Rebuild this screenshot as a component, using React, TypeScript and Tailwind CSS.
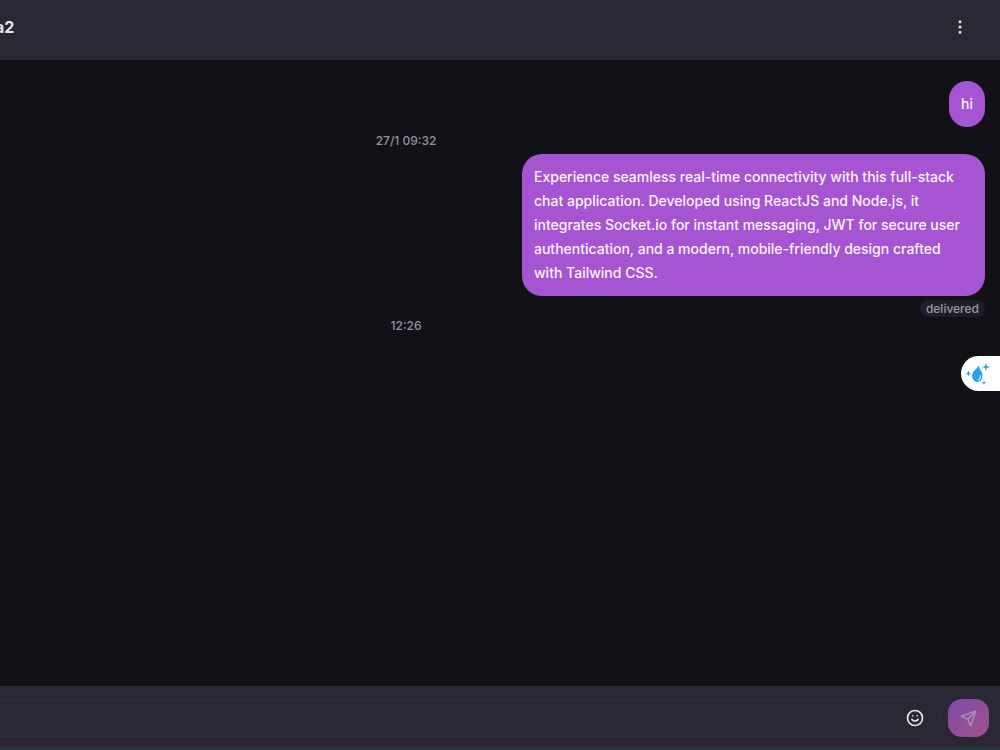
import { MoreVertical, Send, Smile } from "lucide-react";

function Assistant() {
  return (
    <button
      type="button"
      aria-label="Open assistant"
      className="absolute top-[296px] right-0 flex h-[35px] w-[39px] items-center rounded-l-full bg-white pl-[4px]"
    >
      <svg width="26" height="24" viewBox="0 0 26 24" fill="#2b9fea">
        <path d="M13.500 3c.2 4 4 5.500 4 11a5.200 6 0 0 1-10.400 0C7.100 9 12 7.500 13.500 3Z" />
        <path d="M15.300 13c.5 2.500-.5 4.500-2.600 5.200" fill="none" stroke="#b9e2fb" strokeWidth="1.200" />
        <path d="M21 1l1 3 3 1-3 1-1 3-1-3-3-1 3-1Z" />
        <path d="M3.500 8.500l.8 2.200 2.200.8-2.200.8-.8 2.200-.8-2.200-2.200-.8 2.200-.8Z" />
        <path d="M19 18.500l.6 1.700 1.700.6-1.700.6-.6 1.700-.6-1.700-1.700-.6 1.700-.6Z" />
      </svg>
    </button>
  );
}

function Bubble({ children }: { children: string }) {
  return (
    <p className="max-w-[463px] rounded-[20px] bg-[#a555d1] px-3 py-[11px] text-sm leading-6 font-medium text-[#fbf3fe]">
      {children}
    </p>
  );
}

function Time({ children }: { children: string }) {
  return <time className="mr-[173px] block text-center text-xs leading-[17px] font-medium text-[#94939f]">{children}</time>;
}

const about =
  "Experience seamless real-time connectivity with this full-stack chat application. Developed using ReactJS and Node.js, it integrates Socket.io for instant messaging, JWT for secure user authentication, and a modern, mobile-friendly design crafted with\u00a0Tailwind CSS.";

export default function App() {
  return (
    <div className="flex h-screen flex-col overflow-hidden bg-[#121117] font-['Inter',sans-serif] text-[#e4e3ea]">
      <header className="flex h-[60px] shrink-0 items-center justify-between bg-[#292834] pr-[30px] pb-[6px]">
        <h1 className="-ml-[5px] text-base font-bold">a2</h1>
        <button type="button" aria-label="More options">
          <MoreVertical size={18} className="mr-[1px]" />
        </button>
      </header>
      <main className="relative flex-1">
        <div className="flex flex-col pt-[21px] pr-[15px]">
          <div className="flex justify-end pb-[5px]">
            <Bubble>hi</Bubble>
          </div>
          <Time>27/1 09:32</Time>
          <div className="flex flex-col items-end pt-[5px]">
            <Bubble>{about}</Bubble>
            <span className="mt-1 rounded-full bg-[#1f1e28] px-[6px] text-xs leading-[17px] font-medium text-[#9a99a6]">
              delivered
            </span>
          </div>
          <Time>12:26</Time>
        </div>
        <Assistant />
      </main>
      <footer className="shrink-0 border-b-[3px] border-[#24363f] bg-[#292834]">
        <form className="flex items-center gap-2 pt-[13px] pr-[11px] pb-[10px]" onSubmit={(e) => e.preventDefault()}>
          <div className="flex h-[38px] flex-1 items-center rounded-r-[20px] border-y border-r border-[#302f3c] pr-[15px]">
            <input aria-label="Message" className="min-w-0 flex-1 bg-transparent text-sm outline-none" />
            <button type="button" aria-label="Emoji">
              <Smile size={18} strokeWidth={2.25} />
            </button>
          </div>
          <button
            type="submit"
            aria-label="Send"
            className="flex h-[38px] w-[41px] items-center justify-center rounded-[14px] bg-linear-to-br from-[#7d4aa5] to-[#a15191] text-[#a596ae]"
          >
            <Send size={17} />
          </button>
        </form>
      </footer>
    </div>
  );
}
